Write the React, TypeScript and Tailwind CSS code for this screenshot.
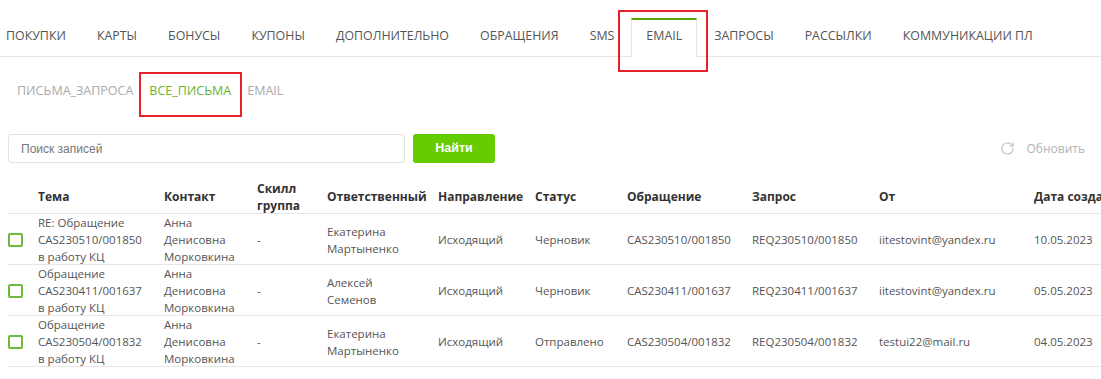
import { RotateCw } from "lucide-react";

const tabs = [
  "ПОКУПКИ",
  "КАРТЫ",
  "БОНУСЫ",
  "КУПОНЫ",
  "ДОПОЛНИТЕЛЬНО",
  "ОБРАЩЕНИЯ",
  "SMS",
  "EMAIL",
  "ЗАПРОСЫ",
  "РАССЫЛКИ",
  "КОММУНИКАЦИИ ПЛ",
];

const subTabs = ["ПИСЬМА_ЗАПРОСА", "ВСЕ_ПИСЬМА", "EMAIL"];

const cols =
  "grid grid-cols-[30px_126px_93px_70px_111px_97px_92px_125px_127px_155px_120px]";

const headers: string[][] = [
  [""],
  ["Тема"],
  ["Контакт"],
  ["Скилл", "группа"],
  ["Ответственный"],
  ["Направление"],
  ["Статус"],
  ["Обращение"],
  ["Запрос"],
  ["От"],
  ["Дата создания"],
];

interface Row {
  subject: string[];
  contact: string[];
  owner: string[];
  status: string;
  cas: string;
  req: string;
  from: string;
  date: string;
}

const rows: Row[] = [
  {
    subject: ["RE: Обращение", "CAS230510/001850", "в работу КЦ"],
    contact: ["Анна", "Денисовна", "Морковкина"],
    owner: ["Екатерина", "Мартыненко"],
    status: "Черновик",
    cas: "CAS230510/001850",
    req: "REQ230510/001850",
    from: "iitestovint@yandex.ru",
    date: "10.05.2023",
  },
  {
    subject: ["Обращение", "CAS230411/001637", "в работу КЦ"],
    contact: ["Анна", "Денисовна", "Морковкина"],
    owner: ["Алексей", "Семенов"],
    status: "Черновик",
    cas: "CAS230411/001637",
    req: "REQ230411/001637",
    from: "iitestovint@yandex.ru",
    date: "05.05.2023",
  },
  {
    subject: ["Обращение", "CAS230504/001832", "в работу КЦ"],
    contact: ["Анна", "Денисовна", "Морковкина"],
    owner: ["Екатерина", "Мартыненко"],
    status: "Отправлено",
    cas: "CAS230504/001832",
    req: "REQ230504/001832",
    from: "testui22@mail.ru",
    date: "04.05.2023",
  },
];

function Lines({ items }: { items: string[] }) {
  return (
    <div>
      {items.map((t, i) => (
        <div key={i} className="whitespace-nowrap">
          {t}
        </div>
      ))}
    </div>
  );
}

export default function App() {
  return (
    <div className="w-[1101px] h-[379px] overflow-hidden bg-white font-['Open_Sans',sans-serif] text-[#555]">
      {/* Main tabs */}
      <div className="flex border-b border-[#e6e6e6] pt-[18px] pl-[6px]">
        {tabs.map((t, i) =>
          t === "EMAIL" ? (
            <div
              key={i}
              className="relative -mb-px mr-[2px] border-x border-t-2 border-x-[#e6e6e6] border-t-[#5aa700] bg-white px-[14px] pt-[7px] pb-[12px] text-[12.4px] leading-[18px] text-[#555]"
            >
              {t}
              <div className="pointer-events-none absolute -left-[14px] -right-[12px] -top-[10px] -bottom-[15px] border-2 border-[#e8202a]" />
            </div>
          ) : (
            <div
              key={i}
              className={`border-t-2 border-transparent pt-[7px] pb-[11px] text-[12.4px] leading-[18px] text-[#555] ${
                i === 0 ? "pr-[15px]" : "px-[15px]"
              } ${i === 6 ? "mr-[2px]" : "mr-px"}`}
            >
              {t}
            </div>
          )
        )}
      </div>

      {/* Sub tabs */}
      <div className="mt-[25px] flex pl-[9px]">
        {subTabs.map((t, i) => (
          <div
            key={i}
            className={`relative px-[8px] text-[12.5px] leading-[18px] ${
              i === 1 ? "text-[#6ab42d]" : "text-[#aaa]"
            }`}
          >
            {t}
            {i === 1 && (
              <div className="pointer-events-none absolute -left-[2px] -right-[3px] -top-[10px] -bottom-[17px] border-2 border-[#e8202a]" />
            )}
          </div>
        ))}
      </div>

      {/* Search */}
      <div className="mt-[34px] flex items-center pl-[8px] pr-[16px]">
        <div className="flex h-[29px] w-[397px] items-center rounded-[3px] border border-[#e3e3e3] pl-[12px] font-['Liberation_Sans',sans-serif] text-[12px] text-[#777]">
          Поиск записей
        </div>
        <button
          type="button"
          className="ml-[8px] h-[29px] w-[82px] rounded-[3px] bg-[#66cc00] font-['Liberation_Sans',sans-serif] text-[12.5px] font-bold text-white"
        >
          Найти
        </button>
        <div className="ml-auto flex items-center gap-[11px] text-[12px] text-[#b3b3b3]">
          <RotateCw size={15} strokeWidth={2} className="text-[#c8c8c8]" />
          <span>Обновить</span>
        </div>
      </div>

      {/* Table */}
      <div className="mt-[17px] pl-[8px] text-[11.5px] leading-[17px]">
        <div className={`${cols} border-b border-[#e6e6e6] text-[12px] font-bold text-[#333]`}>
          {headers.map((h, i) => (
            <div key={i} className="flex h-[33px] items-center whitespace-nowrap">
              <Lines items={h} />
            </div>
          ))}
        </div>
        {rows.map((r, i) => (
          <div key={i} className={`${cols} h-[51px] border-b border-[#e6e6e6]`}>
            <div className="flex items-center">
              <span className="block h-[14px] w-[15px] rounded-[2px] border-2 border-[#6cbb3c]" />
            </div>
            <div className="flex items-center">
              <Lines items={r.subject} />
            </div>
            <div className="flex items-center">
              <Lines items={r.contact} />
            </div>
            <div className="flex items-center">-</div>
            <div className="flex items-center">
              <Lines items={r.owner} />
            </div>
            <div className="flex items-center">Исходящий</div>
            <div className="flex items-center">{r.status}</div>
            <div className="flex items-center">{r.cas}</div>
            <div className="flex items-center">{r.req}</div>
            <div className="flex items-center">{r.from}</div>
            <div className="flex items-center whitespace-nowrap">{r.date}</div>
          </div>
        ))}
      </div>
    </div>
  );
}
